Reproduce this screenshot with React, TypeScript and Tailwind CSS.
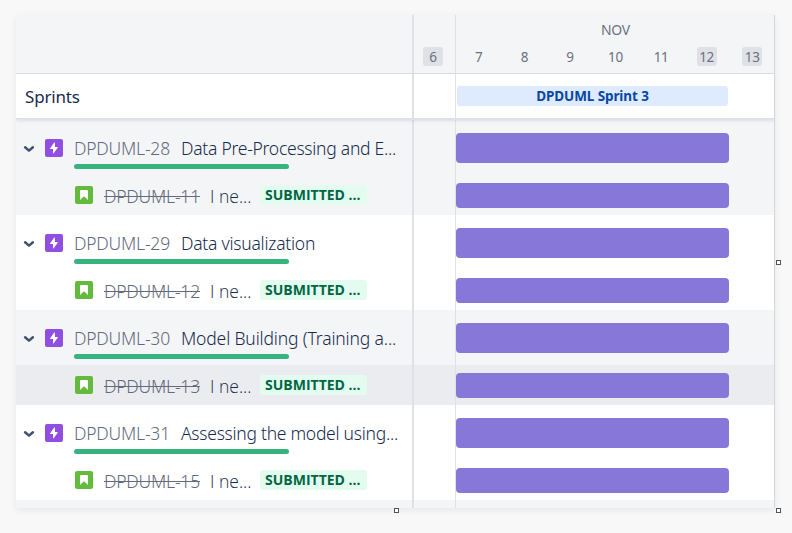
import React from "react";

type Item = {
  epic: string;
  title: string;
  story: string;
  bg: string;
  storyBg: string;
  titleTracking: string;
};

const items: Item[] = [
  { epic: "DPDUML-28", title: "Data Pre-Processing and E...", story: "DPDUML-11", bg: "bg-[#f4f5f7]", storyBg: "", titleTracking: "tracking-[-0.26px]" },
  { epic: "DPDUML-29", title: "Data visualization", story: "DPDUML-12", bg: "bg-white", storyBg: "", titleTracking: "tracking-[-0.24px]" },
  { epic: "DPDUML-30", title: "Model Building (Training a...", story: "DPDUML-13", bg: "bg-[#f4f5f7]", storyBg: "bg-[#ebecf0]", titleTracking: "tracking-[-0.15px]" },
  { epic: "DPDUML-31", title: "Assessing the model using...", story: "DPDUML-15", bg: "bg-white", storyBg: "", titleTracking: "tracking-[-0.27px]" },
];

const days = [
  { n: "7", off: false },
  { n: "8", off: false },
  { n: "9", off: false },
  { n: "10", off: false },
  { n: "11", off: false },
  { n: "12", off: true },
  { n: "13", off: true },
];

function Day({ n, off }: { n: string; off: boolean }) {
  return (
    <span className={`flex h-[19px] items-center justify-center rounded-[3px] pt-[2px] ${off ? "w-5 bg-[#dfe1e6]" : ""}`}>
      {n}
    </span>
  );
}

function Chevron() {
  return (
    <svg width="12" height="8" viewBox="0 0 12 8" className="ml-[7px] shrink-0">
      <path d="M2.1 2.2L6 5.6l3.9-3.4" fill="none" stroke="#42526e" strokeWidth="2.5" strokeLinecap="round" strokeLinejoin="round" />
    </svg>
  );
}

function EpicIcon() {
  return (
    <svg width="18" height="18" viewBox="0 0 18 18" className="relative -top-px ml-[10px] shrink-0">
      <rect width="18" height="18" rx="2" fill="#904ee2" />
      <path d="M9.2 3.6L5.2 9.2a.4.4 0 0 0 .3.7H8v4.2c0 .4.5.5.7.2l4-5.6a.4.4 0 0 0-.3-.7H9.9V3.8c0-.4-.5-.5-.7-.2z" fill="#fff" />
    </svg>
  );
}

function StoryIcon() {
  return (
    <svg width="18" height="18" viewBox="0 0 18 18" className="ml-[59px] shrink-0">
      <rect width="18" height="18" rx="2" fill="#63ba3c" />
      <path d="M6 4h6a1 1 0 0 1 1 1v9l-4-3.8L5 14V5a1 1 0 0 1 1-1z" fill="#fff" />
    </svg>
  );
}

function TimelineCell({ bar }: { bar: string }) {
  return (
    <div className="flex flex-1 border-l-2 border-[#dfe1e6]">
      <div className="w-[41px]" />
      <div className="flex-1 border-l border-[#dfe1e6]">
        <div className={`${bar} w-[273px] rounded-[4px] bg-[#8777d9]`} />
      </div>
    </div>
  );
}

function Group({ item }: { item: Item }) {
  return (
    <div className={`h-[95px] shrink-0 ${item.bg}`}>
      <div className="flex h-[55px]">
        <div className="w-[396px]">
          <div className="flex h-[44px] items-center pt-[13px]">
            <Chevron />
            <EpicIcon />
            <span className="ml-[11px] w-[107px] whitespace-nowrap text-[17.5px] font-[340] tracking-[-0.2px] text-[#626a7b]">{item.epic}</span>
            <span className={`whitespace-nowrap text-[17.5px] font-[340] text-[#172b4d] ${item.titleTracking}`}>{item.title}</span>
          </div>
          <div className="ml-[58px] h-[5px] w-[215px] rounded-full bg-[#36b37e]" />
        </div>
        <TimelineCell bar="mt-[13px] h-[30px]" />
      </div>
      <div className={`flex h-10 ${item.storyBg}`}>
        <div className="flex w-[396px] items-center">
          <StoryIcon />
          <span className="ml-[11px] w-[106px] whitespace-nowrap pt-[2px] text-[17.5px] font-[340] tracking-[-0.2px] text-[#626a7b] line-through decoration-1">{item.story}</span>
          <span className="w-[50px] whitespace-nowrap pt-[2px] font-['Open_Sans','Noto_Sans',sans-serif] text-[17.5px] font-[340] text-[#172b4d]">I ne...</span>
          <span className="flex h-5 w-[107px] items-center whitespace-nowrap rounded-[3px] bg-[#e3fcef] pb-[2px] pl-[5px] font-['Open_Sans','Noto_Sans',sans-serif] text-[14px] font-bold text-[#006644]">SUBMITTED ...</span>
        </div>
        <TimelineCell bar="mt-2 h-[25px]" />
      </div>
    </div>
  );
}

export default function App() {
  return (
    <div className="relative h-[533px] w-[792px] overflow-hidden bg-[#f8f8f8] pl-4 pt-[15px] font-['Noto_Sans','Open_Sans',sans-serif]">
      <div className="flex h-[493px] w-[759px] flex-col overflow-hidden border-r border-[#d3d6dd] bg-[#f4f5f7] shadow-[0_2px_7px_rgba(0,0,0,0.07)]">
        <div className="flex h-[59px] shrink-0 border-b border-[#d9dce3] text-[13.5px] tracking-[-0.3px] text-[#6b7280]">
          <div className="w-[396px]" />
          <div className="flex w-[43px] border-l-2 border-[#dfe1e6] pl-[9px] pt-8">
            <Day n="6" off />
          </div>
          <div className="flex-1 border-l border-[#dfe1e6]">
            <div className="h-8 pl-px pt-[5px] text-center text-[14px] leading-5">NOV</div>
            <div className="-mr-px grid grid-cols-7">
              {days.map((d) => (
                <div key={d.n} className="flex justify-center">
                  <Day {...d} />
                </div>
              ))}
            </div>
          </div>
        </div>
        <div className="z-10 flex h-[45px] shrink-0 border-b border-[#dcdfe6] bg-white shadow-[0_2px_3px_rgba(9,30,66,0.1)]">
          <div className="flex w-[396px] items-center pl-[9px] pt-[2px] text-[17px] tracking-[-0.2px] text-[#172b4d]">Sprints</div>
          <div className="flex flex-1 border-l-2 border-[#dfe1e6]">
            <div className="w-[41px]" />
            <div className="flex flex-1 items-center border-l border-[#dfe1e6] pl-px">
              <div className="flex h-5 w-[271px] items-center justify-center rounded-[3px] bg-[#deebff] text-[13.5px] font-bold tracking-[-0.1px] text-[#0747a6]">DPDUML Sprint 3</div>
            </div>
          </div>
        </div>
        <div className="h-px shrink-0" />
        {items.map((item) => (
          <Group key={item.epic} item={item} />
        ))}
        <div className="flex flex-1">
          <div className="w-[396px]" />
          <TimelineCell bar="h-0" />
        </div>
      </div>
      <div className="absolute left-[776px] top-[260px] h-[5px] w-[5px] border border-[#555] bg-white" />
      <div className="absolute left-[394px] top-[508px] h-[5px] w-[5px] border border-[#555] bg-white" />
      <div className="absolute left-[776px] top-[508px] h-[5px] w-[5px] border border-[#555] bg-white" />
    </div>
  );
}
